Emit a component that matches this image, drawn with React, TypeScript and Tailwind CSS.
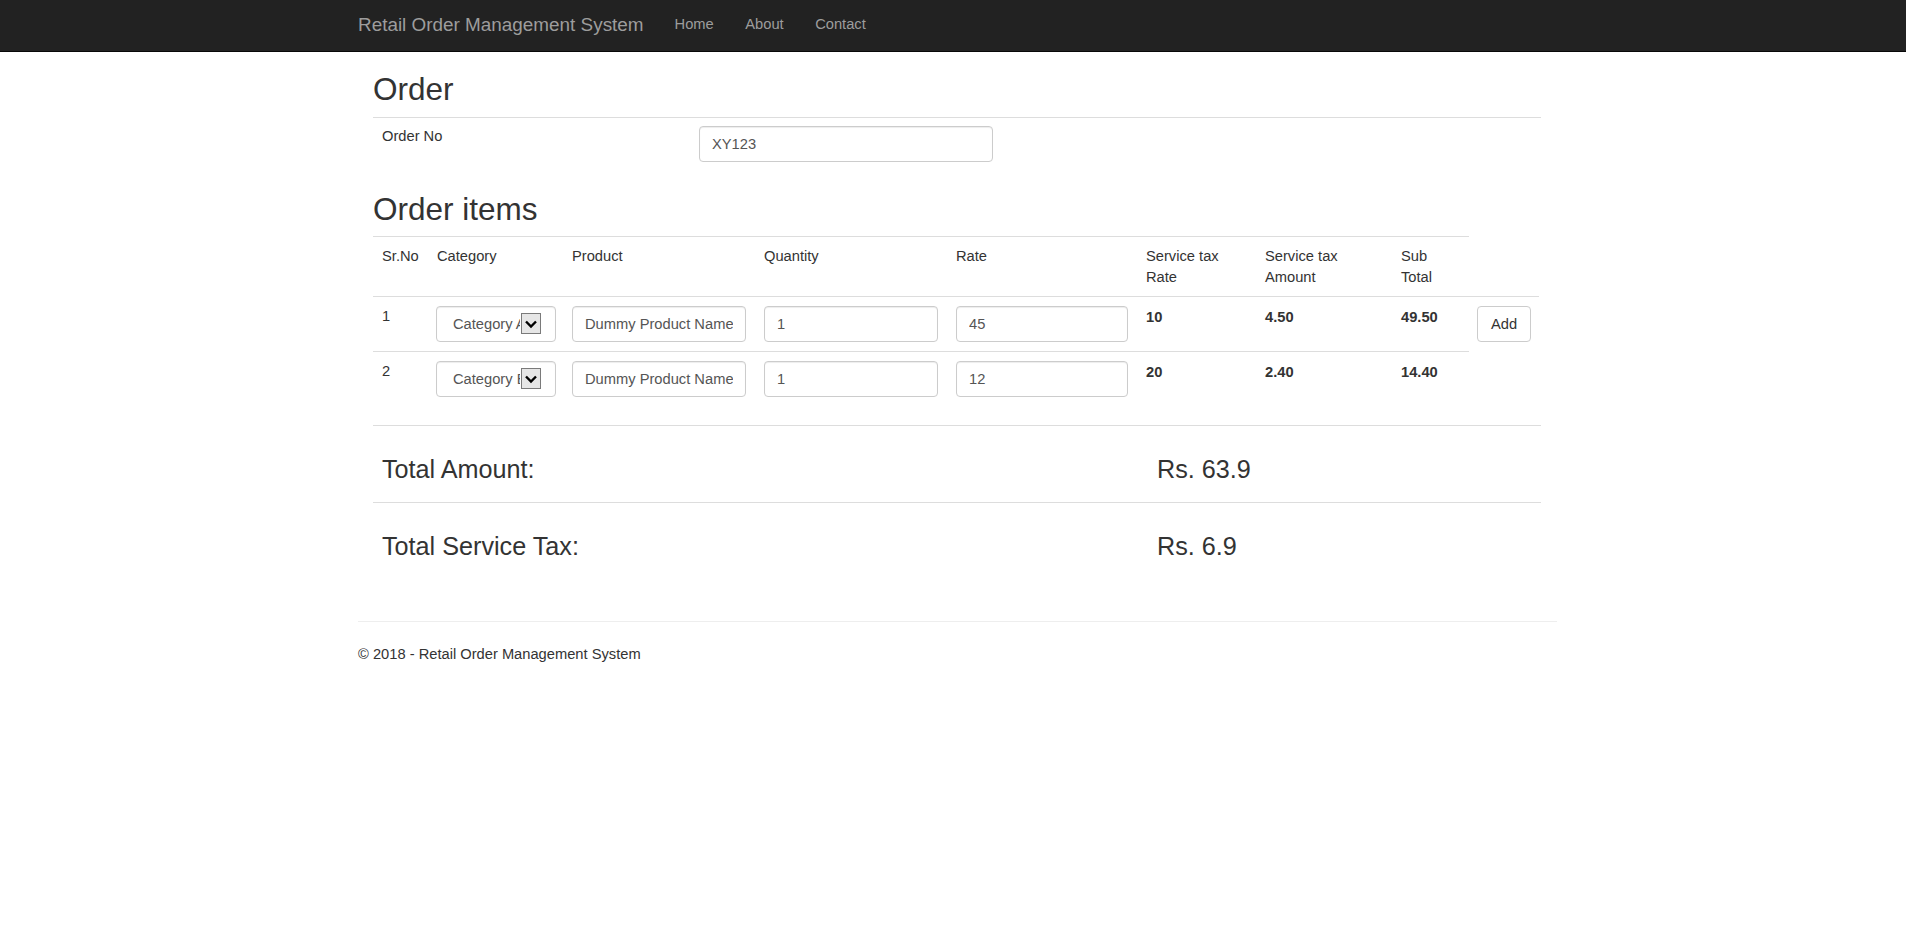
import React from 'react';

interface OrderItem {
    sr: number;
    category: string;
    product: string;
    quantity: number;
    rate: number;
    taxRate: number;
    taxAmount: string;
    subTotal: string;
}

const items: OrderItem[] = [
    { sr: 1, category: 'Category A', product: 'Dummy Product Name', quantity: 1, rate: 45, taxRate: 10, taxAmount: '4.50', subTotal: '49.50' },
    { sr: 2, category: 'Category B', product: 'Dummy Product Name', quantity: 1, rate: 12, taxRate: 20, taxAmount: '2.40', subTotal: '14.40' },
];

const inputCls =
    'w-full h-[36px] border border-[#ccc] rounded-[4px] px-[12px] text-[14.7px] text-[#555] bg-white shadow-[inset_0_1px_1px_rgba(0,0,0,0.075)] outline-none';

function CategorySelect({ value }: { value: string }) {
    return (
        <div className="relative w-[120px] h-[36px]">
            <select
                defaultValue={value}
                className="appearance-none w-full h-full border border-[#ccc] rounded-[4px] pl-[16px] pr-[35px] text-[14.7px] text-[#555] bg-white shadow-[inset_0_1px_1px_rgba(0,0,0,0.075)] outline-none"
            >
                <option>Category A</option>
                <option>Category B</option>
            </select>
            <span className="pointer-events-none absolute left-[85px] top-[7px] w-[20px] h-[21px] border border-[#7a7a7a] bg-[#e6e6e6] flex items-center justify-center">
                <svg width="14" height="10" viewBox="0 0 14 10">
                    <path d="M2 2.5l5 5 5-5" fill="none" stroke="#000" strokeWidth="2.4" />
                </svg>
            </span>
        </div>
    );
}

export default function App() {
    const cell = 'border-t border-[#ddd] px-[9px] align-top';

    return (
        <div className="min-h-screen bg-white font-['Liberation_Sans',Arial,sans-serif] text-[#333] text-[14.7px] leading-[21px]">

            <nav className="h-[52px] bg-[#222] border-b border-[#080808]">
                <div className="mx-auto w-[1220px] pl-[15px] pr-[6px] h-[51px] pb-[3px] flex items-center text-[#9d9d9d]">
                    <span className="text-[18.9px]">Retail Order Management System</span>
                    <ul className="flex ml-[31px] gap-[31.5px]">
                        <li>Home</li>
                        <li>About</li>
                        <li>Contact</li>
                    </ul>
                </div>
            </nav>

            <main className="mx-auto w-[1220px] pl-[15px] pr-[6px]">
                <div className="pl-[15px] pr-[16px]">

                    <h2 className="mt-[20px] mb-[10px] text-[31.5px] leading-[35px] font-normal">Order</h2>
                    <hr className="border-0 border-t border-[#ddd]" />

                    <div className="mt-[8px] flex">
                        <label className="w-[326px] pl-[9px]">Order No</label>
                        <input className={inputCls + ' !w-[294px]'} defaultValue="XY123" />
                    </div>

                    <h2 className="mt-[30px] mb-[9px] text-[31.5px] leading-[35px] font-normal">Order items</h2>

                    <table className="w-[1166px] table-fixed border-collapse mb-[19px]">
                        <colgroup>
                            <col className="w-[55px]" />
                            <col className="w-[135px]" />
                            <col className="w-[192px]" />
                            <col className="w-[192px]" />
                            <col className="w-[190px]" />
                            <col className="w-[119px]" />
                            <col className="w-[136px]" />
                            <col className="w-[77px]" />
                            <col className="w-[70px]" />
                        </colgroup>
                        <tbody>
                            <tr>
                                <td className={cell + ' pt-[9px] pb-[8px]'}>Sr.No</td>
                                <td className={cell + ' pt-[9px] pb-[8px]'}>Category</td>
                                <td className={cell + ' pt-[9px] pb-[8px]'}>Product</td>
                                <td className={cell + ' pt-[9px] pb-[8px]'}>Quantity</td>
                                <td className={cell + ' pt-[9px] pb-[8px]'}>Rate</td>
                                <td className={cell + ' pt-[9px] pb-[8px]'}>Service tax<br />Rate</td>
                                <td className={cell + ' pt-[9px] pb-[8px]'}>Service tax<br />Amount</td>
                                <td className={cell + ' pt-[9px] pb-[8px]'}>Sub<br />Total</td>
                            </tr>

                            {items.map((item, index) => (
                                <tr key={item.sr}>
                                    <td className={cell + ' py-[9px]'}>{item.sr}</td>
                                    <td className={cell + ' py-[9px] !pl-[8px]'}><CategorySelect value={item.category} /></td>
                                    <td className={cell + ' py-[9px]'}><input className={inputCls} defaultValue={item.product} /></td>
                                    <td className={cell + ' py-[9px]'}><input className={inputCls} defaultValue={item.quantity} /></td>
                                    <td className={cell + ' py-[9px]'}><input className={inputCls} defaultValue={item.rate} /></td>
                                    <td className={cell + ' pt-[10px] pb-[8px] font-bold'}>{item.taxRate}</td>
                                    <td className={cell + ' pt-[10px] pb-[8px] font-bold'}>{item.taxAmount}</td>
                                    <td className={cell + ' pt-[10px] pb-[8px] font-bold'}>{item.subTotal}</td>
                                    {index === 0 && (
                                        <td className={cell + ' py-[9px] !pl-[8px]'}>
                                            <button className="h-[36px] w-[54px] border border-[#ccc] rounded-[4px] bg-white text-[#333]">Add</button>
                                        </td>
                                    )}
                                </tr>
                            ))}
                        </tbody>
                    </table>

                    <hr className="border-0 border-t border-[#ddd]" />
                    <div className="flex pt-[29px] pb-[19px] text-[25.2px] leading-[28px]">
                        <span className="w-[784px] pl-[9px]">Total Amount:</span>
                        <span>Rs. 63.9</span>
                    </div>
                    <hr className="border-0 border-t border-[#ddd]" />
                    <div className="flex pt-[29px] text-[25.2px] leading-[28px]">
                        <span className="w-[784px] pl-[9px]">Total Service Tax:</span>
                        <span>Rs. 6.9</span>
                    </div>
                </div>

                <footer className="mt-[61px]">
                    <hr className="border-0 border-t border-[#eee]" />
                    <p className="mt-[22px]">© 2018 - Retail Order Management System</p>
                </footer>
            </main>
        </div>
    );
}
